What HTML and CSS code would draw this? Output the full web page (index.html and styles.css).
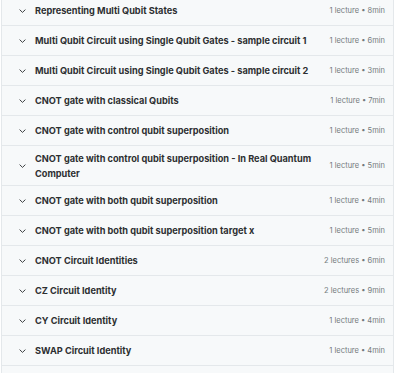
FILE: index.html
```html
<!DOCTYPE html>
<html>
<head>
<meta charset="utf-8">
<link rel="stylesheet" href="styles.css">
</head>
<body>
<div class="curriculum">
  <div class="section"><span class="chev"><svg width="7" height="4" viewBox="0 0 7 4"><path d="M0.6 0.6l2.9 2.8 2.9-2.8" fill="none" stroke="#3e4143" stroke-width="1"/></svg></span><span class="title">Representing Multi Qubit States</span><span class="meta">1 lecture • 8min</span></div>
  <div class="section"><span class="chev"><svg width="7" height="4" viewBox="0 0 7 4"><path d="M0.6 0.6l2.9 2.8 2.9-2.8" fill="none" stroke="#3e4143" stroke-width="1"/></svg></span><span class="title">Multi Qubit Circuit using Single Qubit Gates - sample circuit 1</span><span class="meta">1 lecture • 6min</span></div>
  <div class="section"><span class="chev"><svg width="7" height="4" viewBox="0 0 7 4"><path d="M0.6 0.6l2.9 2.8 2.9-2.8" fill="none" stroke="#3e4143" stroke-width="1"/></svg></span><span class="title">Multi Qubit Circuit using Single Qubit Gates - sample circuit 2</span><span class="meta">1 lecture • 3min</span></div>
  <div class="section"><span class="chev"><svg width="7" height="4" viewBox="0 0 7 4"><path d="M0.6 0.6l2.9 2.8 2.9-2.8" fill="none" stroke="#3e4143" stroke-width="1"/></svg></span><span class="title">CNOT gate with classical Qubits</span><span class="meta">1 lecture • 7min</span></div>
  <div class="section"><span class="chev"><svg width="7" height="4" viewBox="0 0 7 4"><path d="M0.6 0.6l2.9 2.8 2.9-2.8" fill="none" stroke="#3e4143" stroke-width="1"/></svg></span><span class="title">CNOT gate with control qubit superposition</span><span class="meta">1 lecture • 5min</span></div>
  <div class="section tall"><span class="chev"><svg width="7" height="4" viewBox="0 0 7 4"><path d="M0.6 0.6l2.9 2.8 2.9-2.8" fill="none" stroke="#3e4143" stroke-width="1"/></svg></span><span class="title">CNOT gate with control qubit superposition - In Real Quantum Computer</span><span class="meta">1 lecture • 5min</span></div>
  <div class="section"><span class="chev"><svg width="7" height="4" viewBox="0 0 7 4"><path d="M0.6 0.6l2.9 2.8 2.9-2.8" fill="none" stroke="#3e4143" stroke-width="1"/></svg></span><span class="title">CNOT gate with both qubit superposition</span><span class="meta">1 lecture • 4min</span></div>
  <div class="section"><span class="chev"><svg width="7" height="4" viewBox="0 0 7 4"><path d="M0.6 0.6l2.9 2.8 2.9-2.8" fill="none" stroke="#3e4143" stroke-width="1"/></svg></span><span class="title">CNOT gate with both qubit superposition target x</span><span class="meta">1 lecture • 5min</span></div>
  <div class="section"><span class="chev"><svg width="7" height="4" viewBox="0 0 7 4"><path d="M0.6 0.6l2.9 2.8 2.9-2.8" fill="none" stroke="#3e4143" stroke-width="1"/></svg></span><span class="title">CNOT Circuit Identities</span><span class="meta">2 lectures • 6min</span></div>
  <div class="section"><span class="chev"><svg width="7" height="4" viewBox="0 0 7 4"><path d="M0.6 0.6l2.9 2.8 2.9-2.8" fill="none" stroke="#3e4143" stroke-width="1"/></svg></span><span class="title">CZ Circuit Identity</span><span class="meta">2 lectures • 9min</span></div>
  <div class="section"><span class="chev"><svg width="7" height="4" viewBox="0 0 7 4"><path d="M0.6 0.6l2.9 2.8 2.9-2.8" fill="none" stroke="#3e4143" stroke-width="1"/></svg></span><span class="title">CY Circuit Identity</span><span class="meta">1 lecture • 4min</span></div>
  <div class="section"><span class="chev"><svg width="7" height="4" viewBox="0 0 7 4"><path d="M0.6 0.6l2.9 2.8 2.9-2.8" fill="none" stroke="#3e4143" stroke-width="1"/></svg></span><span class="title">SWAP Circuit Identity</span><span class="meta">1 lecture • 4min</span></div>
  <div class="section last"></div>
</div>
</body>
</html>
```
FILE: styles.css
```css
html, body {
  margin: 0;
  padding: 0;
  background: #ffffff;
  overflow: hidden;
}
body {
  font-family: Inter, "Noto Sans", sans-serif;
  color: #2d2f31;
}
.curriculum {
  margin: -4px 0 0 1px;
  width: 393px;
  box-sizing: border-box;
  border-left: 1px solid #e4e8eb;
  border-right: 1px solid #e4e8eb;
}
.section {
  display: flex;
  align-items: center;
  height: 30px;
  box-sizing: border-box;
  border-bottom: 1px solid #e4e8eb;
  background: #f7f9fa;
  padding: 0 8px 0 17px;
}
.section.tall {
  height: 40px;
}
.section.last {
  height: 7px;
  border-bottom: none;
}
.chev {
  width: 16px;
  display: flex;
  align-items: center;
  flex: none;
}
.chev svg {
  display: block;
}
.title {
  flex: 1;
  font-size: 9.2px;
  font-weight: 700;
  line-height: 15px;
  padding-right: 16px;
}
.meta {
  flex: none;
  font-size: 7.5px;
  color: #74797d;
  white-space: nowrap;
}
```
